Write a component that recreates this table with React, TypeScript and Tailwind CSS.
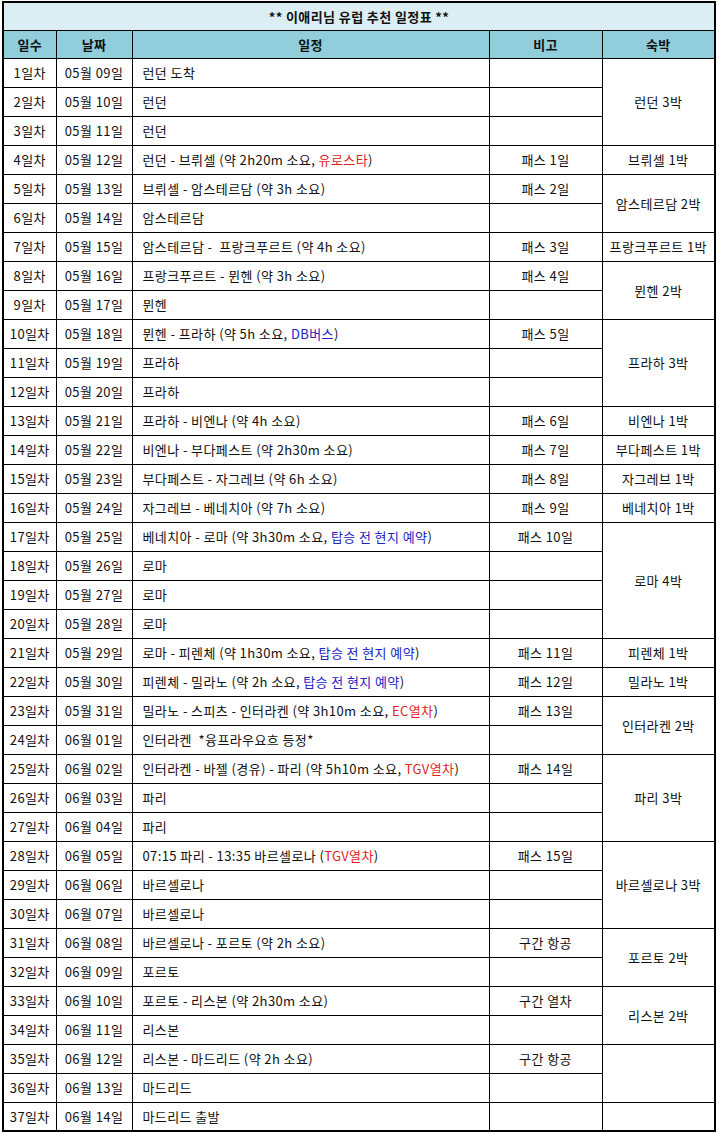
type Seg = { t: string; c?: 'red' | 'blue' };

interface Row {
  date: string;
  plan: Seg[];
  note?: string;
  stay?: { label: string; span: number };
}

const rows: Row[] = [
  { date: '05월 09일', plan: [{ t: '런던 도착' }], stay: { label: '런던 3박', span: 3 } },
  { date: '05월 10일', plan: [{ t: '런던' }] },
  { date: '05월 11일', plan: [{ t: '런던' }] },
  { date: '05월 12일', plan: [{ t: '런던 - 브뤼셀 (약 2h20m 소요, ' }, { t: '유로스타', c: 'red' }, { t: ')' }], note: '패스 1일', stay: { label: '브뤼셀 1박', span: 1 } },
  { date: '05월 13일', plan: [{ t: '브뤼셀 - 암스테르담 (약 3h 소요)' }], note: '패스 2일', stay: { label: '암스테르담 2박', span: 2 } },
  { date: '05월 14일', plan: [{ t: '암스테르담' }] },
  { date: '05월 15일', plan: [{ t: '암스테르담 -  프랑크푸르트 (약 4h 소요)' }], note: '패스 3일', stay: { label: '프랑크푸르트 1박', span: 1 } },
  { date: '05월 16일', plan: [{ t: '프랑크푸르트 - 뮌헨 (약 3h 소요)' }], note: '패스 4일', stay: { label: '뮌헨 2박', span: 2 } },
  { date: '05월 17일', plan: [{ t: '뮌헨' }] },
  { date: '05월 18일', plan: [{ t: '뮌헨 - 프라하 (약 5h 소요, ' }, { t: 'DB버스', c: 'blue' }, { t: ')' }], note: '패스 5일', stay: { label: '프라하 3박', span: 3 } },
  { date: '05월 19일', plan: [{ t: '프라하' }] },
  { date: '05월 20일', plan: [{ t: '프라하' }] },
  { date: '05월 21일', plan: [{ t: '프라하 - 비엔나 (약 4h 소요)' }], note: '패스 6일', stay: { label: '비엔나 1박', span: 1 } },
  { date: '05월 22일', plan: [{ t: '비엔나 - 부다페스트 (약 2h30m 소요)' }], note: '패스 7일', stay: { label: '부다페스트 1박', span: 1 } },
  { date: '05월 23일', plan: [{ t: '부다페스트 - 자그레브 (약 6h 소요)' }], note: '패스 8일', stay: { label: '자그레브 1박', span: 1 } },
  { date: '05월 24일', plan: [{ t: '자그레브 - 베네치아 (약 7h 소요)' }], note: '패스 9일', stay: { label: '베네치아 1박', span: 1 } },
  { date: '05월 25일', plan: [{ t: '베네치아 - 로마 (약 3h30m 소요, ' }, { t: '탑승 전 현지 예약', c: 'blue' }, { t: ')' }], note: '패스 10일', stay: { label: '로마 4박', span: 4 } },
  { date: '05월 26일', plan: [{ t: '로마' }] },
  { date: '05월 27일', plan: [{ t: '로마' }] },
  { date: '05월 28일', plan: [{ t: '로마' }] },
  { date: '05월 29일', plan: [{ t: '로마 - 피렌체 (약 1h30m 소요, ' }, { t: '탑승 전 현지 예약', c: 'blue' }, { t: ')' }], note: '패스 11일', stay: { label: '피렌체 1박', span: 1 } },
  { date: '05월 30일', plan: [{ t: '피렌체 - 밀라노 (약 2h 소요, ' }, { t: '탑승 전 현지 예약', c: 'blue' }, { t: ')' }], note: '패스 12일', stay: { label: '밀라노 1박', span: 1 } },
  { date: '05월 31일', plan: [{ t: '밀라노 - 스피츠 - 인터라켄 (약 3h10m 소요, ' }, { t: 'EC열차', c: 'red' }, { t: ')' }], note: '패스 13일', stay: { label: '인터라켄 2박', span: 2 } },
  { date: '06월 01일', plan: [{ t: '인터라켄  *융프라우요흐 등정*' }] },
  { date: '06월 02일', plan: [{ t: '인터라켄 - 바젤 (경유) - 파리 (약 5h10m 소요, ' }, { t: 'TGV열차', c: 'red' }, { t: ')' }], note: '패스 14일', stay: { label: '파리 3박', span: 3 } },
  { date: '06월 03일', plan: [{ t: '파리' }] },
  { date: '06월 04일', plan: [{ t: '파리' }] },
  { date: '06월 05일', plan: [{ t: '07:15 파리 - 13:35 바르셀로나 (' }, { t: 'TGV열차', c: 'red' }, { t: ')' }], note: '패스 15일', stay: { label: '바르셀로나 3박', span: 3 } },
  { date: '06월 06일', plan: [{ t: '바르셀로나' }] },
  { date: '06월 07일', plan: [{ t: '바르셀로나' }] },
  { date: '06월 08일', plan: [{ t: '바르셀로나 - 포르토 (약 2h 소요)' }], note: '구간 항공', stay: { label: '포르토 2박', span: 2 } },
  { date: '06월 09일', plan: [{ t: '포르토' }] },
  { date: '06월 10일', plan: [{ t: '포르토 - 리스본 (약 2h30m 소요)' }], note: '구간 열차', stay: { label: '리스본 2박', span: 2 } },
  { date: '06월 11일', plan: [{ t: '리스본' }] },
  { date: '06월 12일', plan: [{ t: '리스본 - 마드리드 (약 2h 소요)' }], note: '구간 항공', stay: { label: '', span: 2 } },
  { date: '06월 13일', plan: [{ t: '마드리드' }] },
  { date: '06월 14일', plan: [{ t: '마드리드 출발' }], stay: { label: '', span: 1 } },
];

const cell = 'border border-black p-0 leading-none';

export default function App() {
  return (
    <div
      className="bg-white pt-[1px] pl-[2px] text-[13px] tracking-[0.4px] text-[#111]"
      style={{ fontFamily: '"Noto Sans CJK KR", "Noto Sans", sans-serif' }}
    >
      <table className="table-fixed border-collapse border-2 border-black w-[712px]">
        <colgroup>
          <col className="w-[53px]" />
          <col className="w-[76px]" />
          <col className="w-[357px]" />
          <col className="w-[113px]" />
          <col className="w-[113px]" />
        </colgroup>
        <thead>
          <tr>
            <th colSpan={5} className={`${cell} h-[28px] bg-[#daeef3] font-bold text-center`}>
              ** 이애리님 유럽 추천 일정표 **
            </th>
          </tr>
          <tr className="bg-[#92cddc] font-bold">
            <th className={`${cell} h-[28px] text-center`}>일수</th>
            <th className={`${cell} h-[28px] text-center`}>날짜</th>
            <th className={`${cell} h-[28px] text-center`}>일정</th>
            <th className={`${cell} h-[28px] text-center`}>비고</th>
            <th className={`${cell} h-[28px] text-center`}>숙박</th>
          </tr>
        </thead>
        <tbody>
          {rows.map((r, i) => (
            <tr key={i}>
              <td className={`${cell} h-[29px] text-center`}>{i + 1}일차</td>
              <td className={`${cell} h-[29px] text-center`}>{r.date}</td>
              <td className={`${cell} h-[29px] pl-[10px] whitespace-pre`}>
                {r.plan.map((s, j) => (
                  <span
                    key={j}
                    className={s.c === 'red' ? 'text-[#e01e1e]' : s.c === 'blue' ? 'text-[#2323c0]' : ''}
                  >
                    {s.t}
                  </span>
                ))}
              </td>
              <td className={`${cell} h-[29px] text-center`}>{r.note ?? ''}</td>
              {r.stay && (
                <td rowSpan={r.stay.span} className={`${cell} h-[29px] text-center`}>
                  {r.stay.label}
                </td>
              )}
            </tr>
          ))}
        </tbody>
      </table>
    </div>
  );
}
